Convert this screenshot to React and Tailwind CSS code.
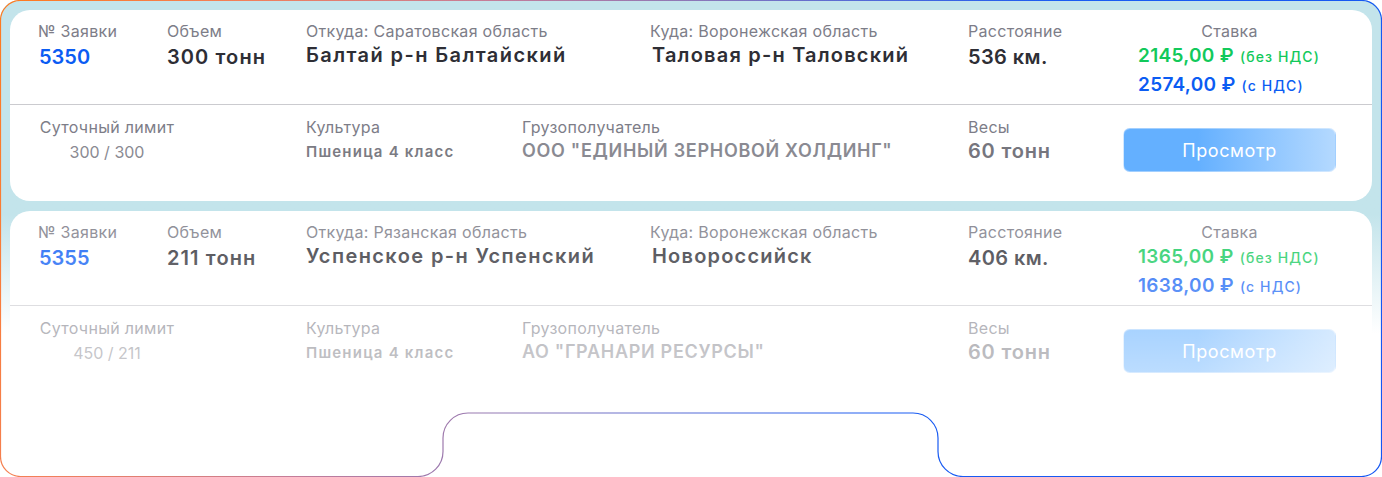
import React from "react";

const orders = [
  {
    id: "5350",
    volume: "300 тонн",
    fromRegion: "Саратовская область",
    fromCity: "Балтай р-н Балтайский",
    toRegion: "Воронежская область",
    toCity: "Таловая р-н Таловский",
    distance: "536 км.",
    priceNet: "2145,00",
    priceGross: "2574,00",
    limit: "300 / 300",
    culture: "Пшеница 4 класс",
    consignee: "ООО \"ЕДИНЫЙ ЗЕРНОВОЙ ХОЛДИНГ\"",
    weight: "60 тонн",
  },
  {
    id: "5355",
    volume: "211 тонн",
    fromRegion: "Рязанская область",
    fromCity: "Успенское р-н Успенский",
    toRegion: "Воронежская область",
    toCity: "Новороссийск",
    distance: "406 км.",
    priceNet: "1365,00",
    priceGross: "1638,00",
    limit: "450 / 211",
    culture: "Пшеница 4 класс",
    consignee: "АО \"ГРАНАРИ РЕСУРСЫ\"",
    weight: "60 тонн",
  },
];

const Label = ({ children, className = "" }) => (
  <div className={`text-[16px] leading-[20px] tracking-[0.3px] text-[#7d7d88] ${className}`}>{children}</div>
);

const value = "text-[20px] leading-[26px] font-semibold text-[#2e2e35]";

const OrderCard = ({ order, faded }) => (
  <div className="relative bg-white rounded-[20px] h-[191px] shrink-0">
    {/* top row */}
    <div className="flex h-[95px] pt-[11px] pl-[28px] border-b border-[#cbcbcf]">
      <div className="w-[129px]">
        <Label>№ Заявки</Label>
        <div className={`mt-[3px] pl-px ${value} tracking-[0px] !text-[#0b5cf3]`}>{order.id}</div>
      </div>
      <div className="w-[139px]">
        <Label>Объем</Label>
        <div className={`mt-[3px] ${value} tracking-[1.1px]`}>{order.volume}</div>
      </div>
      <div className="w-[344px]">
        <Label>Откуда: {order.fromRegion}</Label>
        <div className={`mt-[1px] ${value} tracking-[1.4px]`}>{order.fromCity}</div>
      </div>
      <div className="w-[318px]">
        <Label>Куда: {order.toRegion}</Label>
        <div className={`mt-[1px] pl-[2px] ${value} tracking-[1.2px]`}>{order.toCity}</div>
      </div>
      <div className="w-[155px]">
        <Label>Расстояние</Label>
        <div className={`mt-[3px] ${value} tracking-[0.4px]`}>{order.distance}</div>
      </div>
      <div className="w-[213px] flex flex-col items-center">
        <Label>Ставка</Label>
        <div className="mt-[2px] pl-[15px] self-start">
          <div className="leading-[26px] text-[#12c95b] whitespace-nowrap">
            <span className="text-[19px] font-semibold tracking-[0.3px]">{order.priceNet} ₽</span>
            <span className="text-[14px] font-medium tracking-[1.1px] ml-[6px]">(без НДС)</span>
          </div>
          <div className="mt-[2px] leading-[26px] text-[#0b5cf3] whitespace-nowrap">
            <span className="text-[19px] font-semibold tracking-[0.3px]">{order.priceGross} ₽</span>
            <span className="text-[14px] font-medium tracking-[1.1px] ml-[6px]">(с НДС)</span>
          </div>
        </div>
      </div>
    </div>
    {/* bottom row */}
    <div className="flex pt-[12px] pl-[28px]">
      <div className="w-[268px]">
        <Label className="w-[138px] text-center">Суточный лимит</Label>
        <div className="w-[138px] mt-[4px] text-center text-[16px] leading-[22px] text-[#8a8a92]">{order.limit}</div>
      </div>
      <div className="w-[216px]">
        <Label>Культура</Label>
        <div className="mt-[4px] text-[15px] leading-[22px] font-semibold tracking-[1.2px] text-[#7b7b83]">{order.culture}</div>
      </div>
      <div className="w-[446px]">
        <Label>Грузополучатель</Label>
        <div className="mt-[2px] text-[18px] leading-[24px] font-semibold tracking-[0.7px] text-[#8a8a92]">{order.consignee}</div>
      </div>
      <div className="w-[155px]">
        <Label>Весы</Label>
        <div className="mt-[1px] text-[20px] leading-[26px] font-semibold tracking-[0.8px] text-[#76767e]">{order.weight}</div>
      </div>
      <div className="w-[213px] pt-[11px]">
        <button className="w-[213px] h-[44px] rounded-[7px] border border-white/40 bg-linear-to-r from-[#64b0ff] from-35% to-[#b4d9ff] text-white text-[18px] tracking-[0.6px]">
          Просмотр
        </button>
      </div>
    </div>
    {faded && (
      <div className="absolute inset-0 rounded-[20px] bg-linear-to-b from-white/10 to-white/65 pointer-events-none" />
    )}
  </div>
);

export default function App() {
  return (
    <div
      className="relative w-[1382px] h-[477px] bg-white overflow-hidden"
      style={{ fontFamily: 'Inter, "Open Sans", sans-serif' }}
    >
      <div className="h-full rounded-[20px] bg-linear-to-b from-[#c3e4eb] from-45% to-white to-70% p-[10px] flex flex-col gap-[10px]">
        {orders.map((o, i) => (
          <OrderCard key={o.id} order={o} faded={i > 0} />
        ))}
      </div>
      {/* frame outline with the bottom notch */}
      <svg className="absolute inset-0 pointer-events-none" width="1382" height="477" viewBox="0 0 1382 477">
        <defs>
          <linearGradient id="frame" gradientUnits="userSpaceOnUse" x1="0" y1="0" x2="1382" y2="580">
            <stop offset="0" stopColor="#ff7a1e" />
            <stop offset="0.15" stopColor="#f2805a" />
            <stop offset="0.3" stopColor="#c57d98" />
            <stop offset="0.42" stopColor="#8f78b5" />
            <stop offset="0.55" stopColor="#4a68dc" />
            <stop offset="0.65" stopColor="#1a5cf2" />
            <stop offset="1" stopColor="#1456f2" />
          </linearGradient>
        </defs>
        <path
          d="M 20.5 0.5 H 1361.5 A 20 20 0 0 1 1381.5 20.5 V 456.5 A 20 20 0 0 1 1361.5 476.5 H 963 A 25 25 0 0 1 938 451.5 V 438 A 25 25 0 0 0 913 413 H 468 A 25 25 0 0 0 443 438 V 451.5 A 25 25 0 0 1 418 476.5 H 20.5 A 20 20 0 0 1 0.5 456.5 V 20.5 A 20 20 0 0 1 20.5 0.5 Z"
          fill="none"
          stroke="url(#frame)"
          strokeWidth="1.2"
        />
      </svg>
    </div>
  );
}
